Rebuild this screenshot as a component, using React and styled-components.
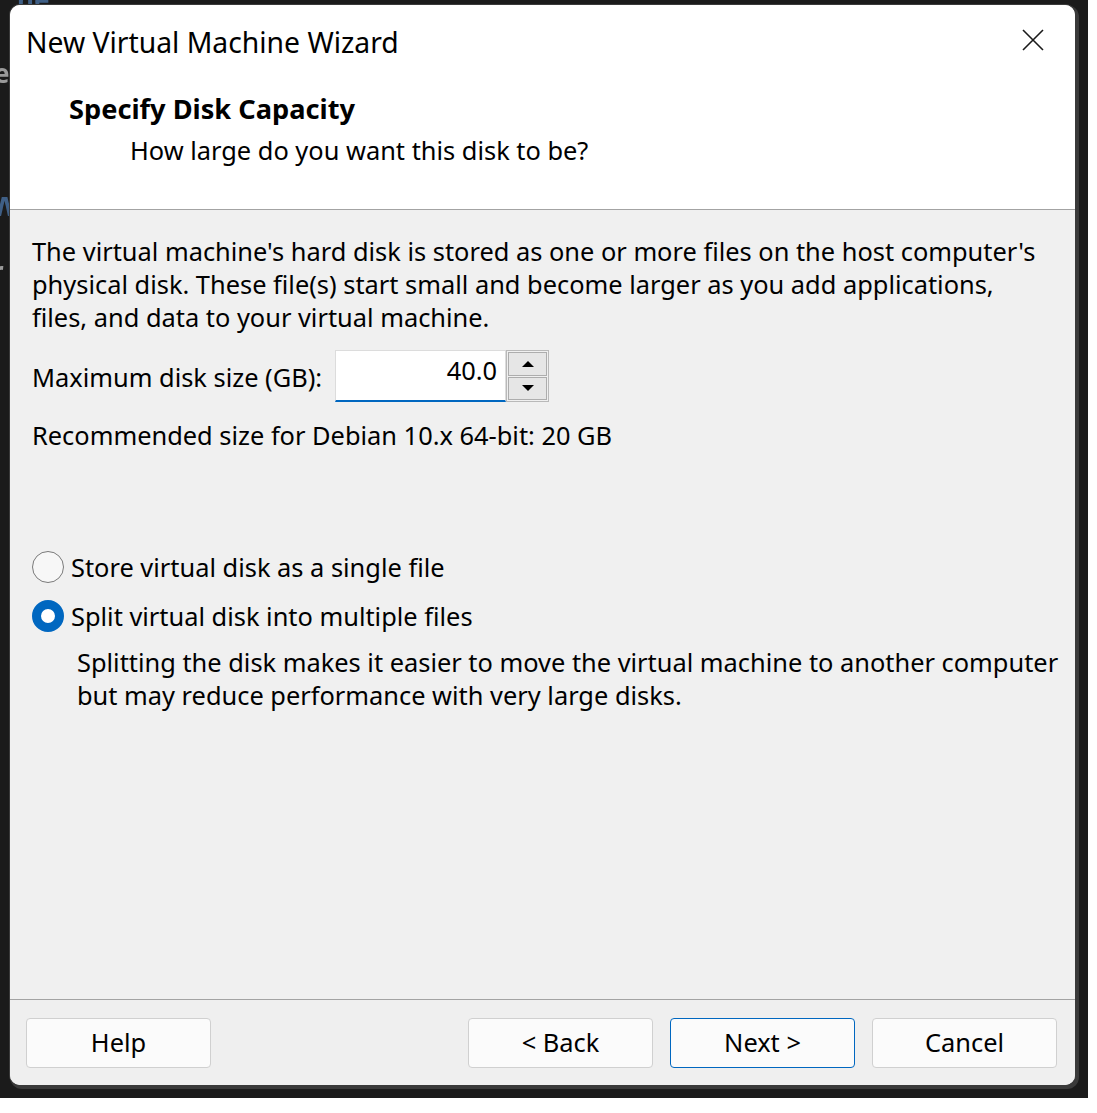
import React from "react";
import styled, { createGlobalStyle } from "styled-components";

const GlobalStyle = createGlobalStyle`
  html, body {
    margin: 0;
    padding: 0;
    background: #ffffff;
  }
  body {
    font-family: "Noto Sans", "Open Sans", sans-serif;
    color: #000000;
  }
`;

const App = () => {
  return (
    <>
      <GlobalStyle />
      <Screen>
        <Backdrop aria-hidden="true">
          <Peek $top={-14} $left={17} $color="#3f5f86" $size={26}>
            ne
          </Peek>
          <Peek $top={60} $left={-6} $color="#9a9a9a" $size={26}>
            e,
          </Peek>
          <Peek $top={186} $left={-10} $color="#3f5f86" $size={34}>
            w
          </Peek>
          <Peek $top={258} $left={-8} $color="#9a9a9a" $size={26}>
            r
          </Peek>
        </Backdrop>
        <Dialog>
          <Header>
            <TitleBar>
              <Title>New Virtual Machine Wizard</Title>
              <CloseButton aria-label="Close">
                <svg width="22" height="22" viewBox="0 0 22 22">
                  <path
                    d="M1 1 L21 21 M21 1 L1 21"
                    stroke="#1a1a1a"
                    strokeWidth="1.6"
                    fill="none"
                  />
                </svg>
              </CloseButton>
            </TitleBar>
            <Heading>Specify Disk Capacity</Heading>
            <SubHeading>How large do you want this disk to be?</SubHeading>
          </Header>

          <Body>
            <Paragraph>
              The virtual machine's hard disk is stored as one or more files on
              the host computer's
              <br />
              physical disk. These file(s) start small and become larger as you
              add applications,
              <br />
              files, and data to your virtual machine.
            </Paragraph>

            <SizeRow>
              <Label>Maximum disk size (GB):</Label>
              <Spin>
                <SpinInput>40.0</SpinInput>
                <SpinButtons>
                  <SpinButton aria-label="Increase">
                    <Arrow $up />
                  </SpinButton>
                  <SpinButton aria-label="Decrease">
                    <Arrow />
                  </SpinButton>
                </SpinButtons>
              </Spin>
            </SizeRow>

            <Recommend>Recommended size for Debian 10.x 64-bit: 20 GB</Recommend>

            <RadioGroup>
              <RadioRow>
                <Radio />
                <RadioText>Store virtual disk as a single file</RadioText>
              </RadioRow>
              <RadioRow>
                <Radio $checked />
                <RadioText>Split virtual disk into multiple files</RadioText>
              </RadioRow>
            </RadioGroup>

            <Description>
              Splitting the disk makes it easier to move the virtual machine to
              another computer
              <br />
              but may reduce performance with very large disks.
            </Description>
          </Body>

          <Footer>
            <Button>Help</Button>
            <Spacer />
            <Button>&lt; Back</Button>
            <Button $primary>Next &gt;</Button>
            <Button>Cancel</Button>
          </Footer>
        </Dialog>
      </Screen>
    </>
  );
};

export default App;

const Screen = styled.div`
  position: relative;
  width: 1088px;
  height: 1098px;
  box-sizing: border-box;
  padding: 5px 0 0 10px;
  background: #1b1b1b;
  overflow: hidden;
`;

const Backdrop = styled.div`
  position: absolute;
  inset: 0;
  z-index: 0;
`;

const Peek = styled.span`
  position: absolute;
  top: ${({ $top }) => $top}px;
  left: ${({ $left }) => $left}px;
  color: ${({ $color }) => $color};
  font-size: ${({ $size }) => $size}px;
  font-weight: 700;
  line-height: 1;
  filter: blur(0.6px);
`;

const Dialog = styled.div`
  position: relative;
  z-index: 1;
  width: 1065px;
  height: 1080px;
  display: flex;
  flex-direction: column;
  border-radius: 10px;
  overflow: hidden;
  background: #f0f0f0;
  box-shadow: 0 0 0 1px #3a3a3a, 2px 2px 0 2px #3a3a3a;
`;

const Header = styled.div`
  height: 205px;
  box-sizing: border-box;
  padding: 19px 0 0 0;
  background: #ffffff;
  border-bottom: 1px solid #a3a3a3;
  flex-shrink: 0;
`;

const TitleBar = styled.div`
  display: flex;
  justify-content: space-between;
  align-items: center;
  padding: 0 31px 0 16px;
  height: 36px;
`;

const Title = styled.div`
  font-size: 28.3px;
  line-height: 36px;
  font-weight: 400;
`;

const CloseButton = styled.div`
  display: flex;
  width: 22px;
  height: 22px;
  margin-top: -4px;
`;

const Heading = styled.div`
  margin: 31px 0 0 59px;
  font-size: 27.2px;
  line-height: 36px;
  font-weight: 700;
`;

const SubHeading = styled.div`
  margin: 5px 0 0 120px;
  font-size: 25.4px;
  line-height: 36px;
`;

const Body = styled.div`
  flex: 1;
  padding: 25px 0 0 22px;
`;

const Paragraph = styled.p`
  margin: 0;
  font-size: 25.4px;
  line-height: 33px;
  white-space: nowrap;
`;

const SizeRow = styled.div`
  display: flex;
  align-items: center;
  margin-top: 16px;
  height: 52px;
`;

const Label = styled.span`
  font-size: 25.4px;
  line-height: 33px;
  margin-right: 13px;
  padding-top: 2px;
`;

const Spin = styled.div`
  display: flex;
  height: 52px;
`;

const SpinInput = styled.div`
  width: 171px;
  height: 52px;
  box-sizing: border-box;
  padding: 1px 8px 0 0;
  background: #ffffff;
  border: 1px solid #dcdcdc;
  border-bottom: 2px solid #0067c0;
  font-size: 25.4px;
  line-height: 36px;
  text-align: right;
`;

const SpinButtons = styled.div`
  display: flex;
  flex-direction: column;
  width: 43px;
  height: 52px;
  box-sizing: border-box;
  border: 1px solid #b9b9b9;
  background: #f0f0f0;
  padding: 1px;
  gap: 1px;
`;

const SpinButton = styled.div`
  flex: 1;
  display: flex;
  align-items: center;
  justify-content: center;
  background: #e6e6e6;
  border: 1px solid #adadad;
`;

const Arrow = styled.span`
  width: 0;
  height: 0;
  border-left: 6px solid transparent;
  border-right: 6px solid transparent;
  ${({ $up }) =>
    $up ? "border-bottom: 6px solid #000;" : "border-top: 6px solid #000;"}
`;

const Recommend = styled.div`
  margin-top: 17px;
  font-size: 25.4px;
  line-height: 33px;
`;

const RadioGroup = styled.div`
  display: flex;
  flex-direction: column;
  gap: 9px;
  margin-top: 95px;
`;

const RadioRow = styled.div`
  display: flex;
  align-items: center;
  height: 40px;
`;

const Radio = styled.span`
  width: 32px;
  height: 32px;
  box-sizing: border-box;
  border-radius: 50%;
  margin-right: 7px;
  flex-shrink: 0;
  ${({ $checked }) =>
    $checked
      ? `
    background: #ffffff;
    border: 9px solid #0067c0;
  `
      : `
    background: #f7f7f7;
    border: 1.5px solid #7a7a7a;
  `}
`;

const RadioText = styled.span`
  font-size: 25.4px;
  line-height: 33px;
`;

const Description = styled.p`
  margin: 10px 0 0 45px;
  font-size: 25.4px;
  line-height: 33px;
  white-space: nowrap;
`;

const Footer = styled.div`
  display: flex;
  gap: 17px;
  padding: 18px 18px 17px 16px;
  border-top: 1px solid #a3a3a3;
  background: #efefef;
  flex-shrink: 0;
`;

const Spacer = styled.div`
  flex: 1;
`;

const Button = styled.div`
  width: 185px;
  height: 50px;
  box-sizing: border-box;
  display: flex;
  align-items: center;
  justify-content: center;
  background: #fbfbfb;
  border: 1px solid ${({ $primary }) => ($primary ? "#0067c0" : "#d0d0d0")};
  border-radius: 4px;
  font-size: 25.4px;
  line-height: 1;
`;
